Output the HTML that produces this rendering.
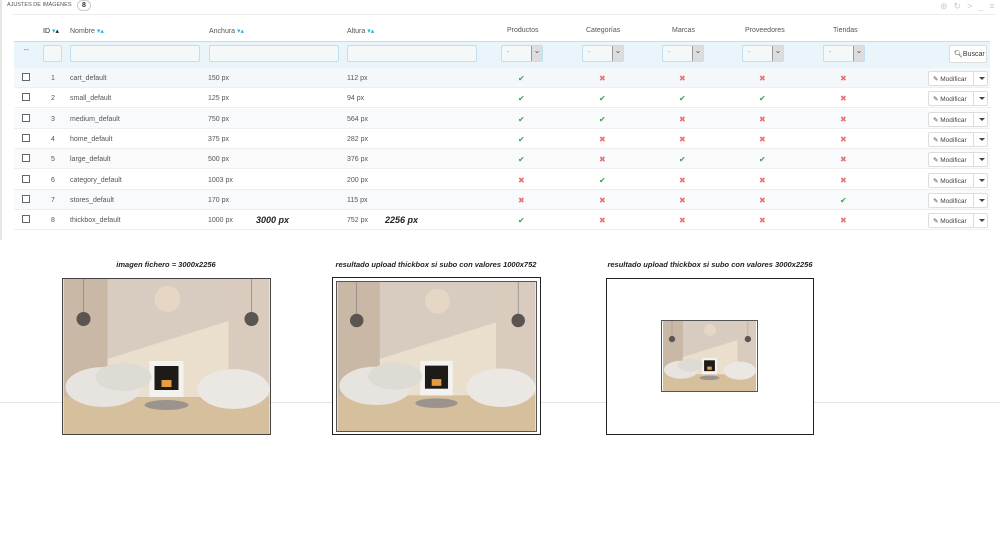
<!DOCTYPE html>
<html><head><meta charset="utf-8"><style>
*{box-sizing:border-box;margin:0;padding:0}
body{width:1000px;height:536px;background:#fff;font-family:"Liberation Sans",sans-serif;color:#555;position:relative;overflow:hidden;font-size:7px}
.a{position:absolute}
.hl{position:absolute;left:0;right:0;top:402px;height:1px;background:#e4e4e4}
.panel{position:absolute;left:0;top:0;width:994px;height:240px;border-left:2px solid #e6e6e6;background:#fff}
.inp{position:absolute;top:45px;height:17px;border:1px solid #bde1ef;background:#f5f8f9;border-radius:2px}
.sel{position:absolute;top:45px;height:17px;width:42px;border:1px solid #bde1ef;background:#f5f8f9;border-radius:2px}
.sel::after{content:"⌄";position:absolute;right:0;top:0;width:10px;height:15px;background:#ddd;border-left:1px solid #999;font-size:8px;color:#555;text-align:center;line-height:10px}
.sel span{position:absolute;left:5px;top:3px;font-size:7px;color:#999}
.row{position:absolute;left:12px;width:976px;height:20px;border-bottom:1px solid #eee}
.row>span{margin-top:2px}
.cb{position:absolute;left:8px;top:5px;width:8px;height:8px;border:1px solid #666;background:#fff}
.ok{color:#3fa04f;font-size:8px}
.no{color:#e57373;font-size:8px}
.btn{position:absolute;left:914px;top:3px;width:60px;height:15px;border:1px solid #ddd;background:#fff;border-radius:2px;font-size:6.5px;color:#444}
.btn b{position:absolute;left:4px;top:3px;font-weight:normal}
.btn i{position:absolute;left:44px;top:0;width:1px;height:13px;background:#ddd}
.btn em{position:absolute;left:50px;top:5px;border-left:3px solid transparent;border-right:3px solid transparent;border-top:3px solid #444}
.cap{position:absolute;top:260px;font-style:italic;font-weight:bold;font-size:7.5px;color:#222;text-align:center}
</style></head><body>
<div class="hl"></div>
<div class="panel">
<div class="a" style="left:5px;top:2px;font-size:5.5px;color:#555">AJUSTES DE IMÁGENES</div>
<div class="a" style="left:75px;top:0;width:14px;height:11px;border:1px solid #ccc;border-radius:6px;font-size:7px;text-align:center;font-weight:bold;color:#333;line-height:9px;background:#fff">8</div>
<div class="a" style="left:10px;top:14px;width:984px;height:1px;background:#eee"></div>
<div class="a" style="left:938px;top:1px;font-size:9px;color:#ccc;letter-spacing:6px">⊕↻&gt;_≡</div>
<div class="a" style="top:27px;left:41px;color:#222;font-size:7px">ID <span style="color:#25b9d7">▾</span>▴</div>
<div class="a" style="top:27px;left:68px;font-size:7px">Nombre <span style="color:#25b9d7">▾▴</span></div>
<div class="a" style="top:27px;left:207px;font-size:7px">Anchura <span style="color:#25b9d7">▾▴</span></div>
<div class="a" style="top:27px;left:345px;font-size:7px">Altura <span style="color:#25b9d7">▾▴</span></div>
<div class="a" style="top:27px;left:505px;font-size:7px">Productos</div>
<div class="a" style="top:27px;left:584px;font-size:7px">Categorías</div>
<div class="a" style="top:27px;left:670px;font-size:7px">Marcas</div>
<div class="a" style="top:27px;left:743px;font-size:7px">Proveedores</div>
<div class="a" style="top:27px;left:831px;font-size:7px">Tiendas</div>
<div class="a" style="left:12px;top:41px;width:976px;height:27px;background:#eaf5fb;border-top:1px solid #bde1ef"></div>
<div class="a" style="left:22px;top:47px;font-size:7px">--</div>
<div class="inp" style="left:41px;width:19px"></div>
<div class="inp" style="left:68px;width:130px"></div>
<div class="inp" style="left:207px;width:130px"></div>
<div class="inp" style="left:345px;width:130px"></div>
<div class="sel" style="left:499px"><span>-</span></div>
<div class="sel" style="left:580px"><span>-</span></div>
<div class="sel" style="left:660px"><span>-</span></div>
<div class="sel" style="left:740px"><span>-</span></div>
<div class="sel" style="left:821px"><span>-</span></div>
<div class="a" style="left:947px;top:45px;width:38px;height:18px;background:#fff;border:1px solid #ddd;border-radius:2px;font-size:7px;color:#333;padding:4px 0 0 4px">🔍︎Buscar</div>

<div class="row" style="top:68px;background:#f4f8fb"><div class="cb"></div><span class="a" style="left:37px;top:5px">1</span><span class="a" style="left:56px;top:5px">cart_default</span><span class="a" style="left:194px;top:5px">150 px</span><span class="a" style="left:333px;top:5px">112 px</span><span class="a ok" style="left:504px;top:4px">✔</span><span class="a no" style="left:585px;top:4px">✖</span><span class="a no" style="left:665px;top:4px">✖</span><span class="a no" style="left:745px;top:4px">✖</span><span class="a no" style="left:826px;top:4px">✖</span><div class="btn"><b>✎ Modificar</b><i></i><em></em></div></div>
<div class="row" style="top:88px"><div class="cb"></div><span class="a" style="left:37px;top:5px">2</span><span class="a" style="left:56px;top:5px">small_default</span><span class="a" style="left:194px;top:5px">125 px</span><span class="a" style="left:333px;top:5px">94 px</span><span class="a ok" style="left:504px;top:4px">✔</span><span class="a ok" style="left:585px;top:4px">✔</span><span class="a ok" style="left:665px;top:4px">✔</span><span class="a ok" style="left:745px;top:4px">✔</span><span class="a no" style="left:826px;top:4px">✖</span><div class="btn"><b>✎ Modificar</b><i></i><em></em></div></div>
<div class="row" style="top:109px;background:#f8fafb"><div class="cb"></div><span class="a" style="left:37px;top:5px">3</span><span class="a" style="left:56px;top:5px">medium_default</span><span class="a" style="left:194px;top:5px">750 px</span><span class="a" style="left:333px;top:5px">564 px</span><span class="a ok" style="left:504px;top:4px">✔</span><span class="a ok" style="left:585px;top:4px">✔</span><span class="a no" style="left:665px;top:4px">✖</span><span class="a no" style="left:745px;top:4px">✖</span><span class="a no" style="left:826px;top:4px">✖</span><div class="btn"><b>✎ Modificar</b><i></i><em></em></div></div>
<div class="row" style="top:129px"><div class="cb"></div><span class="a" style="left:37px;top:5px">4</span><span class="a" style="left:56px;top:5px">home_default</span><span class="a" style="left:194px;top:5px">375 px</span><span class="a" style="left:333px;top:5px">282 px</span><span class="a ok" style="left:504px;top:4px">✔</span><span class="a no" style="left:585px;top:4px">✖</span><span class="a no" style="left:665px;top:4px">✖</span><span class="a no" style="left:745px;top:4px">✖</span><span class="a no" style="left:826px;top:4px">✖</span><div class="btn"><b>✎ Modificar</b><i></i><em></em></div></div>
<div class="row" style="top:149px;background:#f8fafb"><div class="cb"></div><span class="a" style="left:37px;top:5px">5</span><span class="a" style="left:56px;top:5px">large_default</span><span class="a" style="left:194px;top:5px">500 px</span><span class="a" style="left:333px;top:5px">376 px</span><span class="a ok" style="left:504px;top:4px">✔</span><span class="a no" style="left:585px;top:4px">✖</span><span class="a ok" style="left:665px;top:4px">✔</span><span class="a ok" style="left:745px;top:4px">✔</span><span class="a no" style="left:826px;top:4px">✖</span><div class="btn"><b>✎ Modificar</b><i></i><em></em></div></div>
<div class="row" style="top:170px"><div class="cb"></div><span class="a" style="left:37px;top:5px">6</span><span class="a" style="left:56px;top:5px">category_default</span><span class="a" style="left:194px;top:5px">1003 px</span><span class="a" style="left:333px;top:5px">200 px</span><span class="a no" style="left:504px;top:4px">✖</span><span class="a ok" style="left:585px;top:4px">✔</span><span class="a no" style="left:665px;top:4px">✖</span><span class="a no" style="left:745px;top:4px">✖</span><span class="a no" style="left:826px;top:4px">✖</span><div class="btn"><b>✎ Modificar</b><i></i><em></em></div></div>
<div class="row" style="top:190px;background:#f8fafb"><div class="cb"></div><span class="a" style="left:37px;top:5px">7</span><span class="a" style="left:56px;top:5px">stores_default</span><span class="a" style="left:194px;top:5px">170 px</span><span class="a" style="left:333px;top:5px">115 px</span><span class="a no" style="left:504px;top:4px">✖</span><span class="a no" style="left:585px;top:4px">✖</span><span class="a no" style="left:665px;top:4px">✖</span><span class="a no" style="left:745px;top:4px">✖</span><span class="a ok" style="left:826px;top:4px">✔</span><div class="btn"><b>✎ Modificar</b><i></i><em></em></div></div>
<div class="row" style="top:210px"><div class="cb"></div><span class="a" style="left:37px;top:5px">8</span><span class="a" style="left:56px;top:5px">thickbox_default</span><span class="a" style="left:194px;top:5px">1000 px</span><span class="a" style="left:242px;top:3px;font-size:9px;font-weight:bold;font-style:italic;color:#222">3000 px</span><span class="a" style="left:333px;top:5px">752 px</span><span class="a" style="left:371px;top:3px;font-size:9px;font-weight:bold;font-style:italic;color:#222">2256 px</span><span class="a ok" style="left:504px;top:4px">✔</span><span class="a no" style="left:585px;top:4px">✖</span><span class="a no" style="left:665px;top:4px">✖</span><span class="a no" style="left:745px;top:4px">✖</span><span class="a no" style="left:826px;top:4px">✖</span><div class="btn"><b>✎ Modificar</b><i></i><em></em></div></div>
</div>

<div class="cap" style="left:66px;width:200px">imagen fichero = 3000x2256</div>
<div class="cap" style="left:306px;width:260px">resultado upload thickbox si subo con valores 1000x752</div>
<div class="cap" style="left:580px;width:260px">resultado upload thickbox si subo con valores 3000x2256</div>

<svg width="0" height="0" style="position:absolute"><symbol id="room" viewBox="0 0 206 155">
<rect width="206" height="155" fill="#d8ccc0"/>
<rect x="0" y="0" width="44" height="120" fill="#c9b8a6"/>
<polygon points="44,80 165,42 165,118 44,118" fill="#eadfcc"/>
<rect x="165" y="0" width="41" height="120" fill="#d9cbbd"/>
<rect x="0" y="118" width="206" height="37" fill="#d6bf9c"/>
<circle cx="104" cy="20" r="13" fill="#e6d6c4"/>
<line x1="20" y1="0" x2="20" y2="33" stroke="#777" stroke-width="0.6"/><line x1="188" y1="0" x2="188" y2="33" stroke="#777" stroke-width="0.6"/>
<circle cx="20" cy="40" r="7" fill="#5a5550"/><circle cx="188" cy="40" r="7" fill="#5a5550"/>
<rect x="86" y="82" width="34" height="36" fill="#f4f2ef"/><rect x="91" y="87" width="24" height="24" fill="#1d1a18"/>
<rect x="98" y="101" width="10" height="7" fill="#e89a40"/>
<ellipse cx="40" cy="108" rx="38" ry="20" fill="#e7e3de"/>
<ellipse cx="60" cy="98" rx="28" ry="14" fill="#dedad4"/>
<ellipse cx="170" cy="110" rx="36" ry="20" fill="#ebe7e2"/>
<ellipse cx="103" cy="126" rx="22" ry="5" fill="#9a948c"/>
</symbol></svg>

<svg class="a" style="left:62px;top:278px;border:1px solid #444" width="209" height="157"><use href="#room" width="207" height="155"/></svg>
<div class="a" style="left:332px;top:277px;width:209px;height:158px;border:1px solid #222;background:#fff"></div>
<svg class="a" style="left:336px;top:281px;border:1px solid #555" width="201" height="151"><use href="#room" width="199" height="149"/></svg>
<div class="a" style="left:606px;top:278px;width:208px;height:157px;border:1px solid #222;background:#fff"></div>
<svg class="a" style="left:661px;top:320px;border:1px solid #555" width="97" height="72"><use href="#room" width="95" height="70"/></svg>
</body></html>
